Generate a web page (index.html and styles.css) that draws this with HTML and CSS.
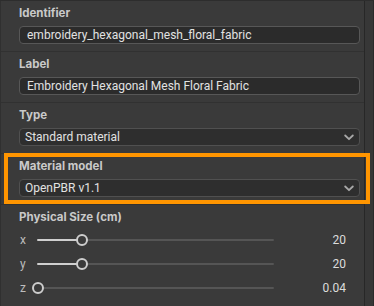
FILE: index.html
```html
<!DOCTYPE html>
<html>
<head>
<meta charset="utf-8">
<link rel="stylesheet" href="styles.css">
</head>
<body>
<div class="panel">
  <div class="content">
    <div class="section">
      <div class="label">Identifier</div>
      <div class="field">embroidery_hexagonal_mesh_floral_fabric</div>
    </div>
    <div class="section">
      <div class="label">Label</div>
      <div class="field">Embroidery Hexagonal Mesh Floral Fabric</div>
    </div>
    <div class="section">
      <div class="label">Type</div>
      <div class="select"><span>Standard material</span><svg class="chev" width="10" height="7" viewBox="0 0 10 7"><path d="M1.2 1.5 L5 5.2 L8.8 1.5" fill="none" stroke="#a8a8a8" stroke-width="1.8" stroke-linecap="round" stroke-linejoin="round"/></svg></div>
    </div>
    <div class="section">
      <div class="label">Material model</div>
      <div class="select"><span>OpenPBR v1.1</span><svg class="chev" width="10" height="7" viewBox="0 0 10 7"><path d="M1.2 1.5 L5 5.2 L8.8 1.5" fill="none" stroke="#a8a8a8" stroke-width="1.8" stroke-linecap="round" stroke-linejoin="round"/></svg></div>
    </div>
    <div class="section last">
      <div class="label">Physical Size (cm)</div>
      <div class="row">
        <span class="axis">x</span>
        <div class="slider"><div class="track"></div><div class="fill" style="width:18.5%"></div><div class="thumb" style="left:18.5%"></div></div>
        <span class="value">20</span>
      </div>
      <div class="row">
        <span class="axis">y</span>
        <div class="slider"><div class="track"></div><div class="fill" style="width:18.5%"></div><div class="thumb" style="left:18.5%"></div></div>
        <span class="value">20</span>
      </div>
      <div class="row">
        <span class="axis">z</span>
        <div class="slider"><div class="track"></div><div class="fill" style="width:0%"></div><div class="thumb" style="left:0%"></div></div>
        <span class="value">0.04</span>
      </div>
    </div>
  </div>
  <div class="scrollbar"></div>
</div>
<div class="highlight"></div>
</body>
</html>
```
FILE: styles.css
```css
html, body {
  margin: 0;
  padding: 0;
  width: 374px;
  height: 306px;
  overflow: hidden;
  background: #3a3a3a;
  font-family: Inter, "Liberation Sans", sans-serif;
  -webkit-font-smoothing: antialiased;
}
.panel {
  display: flex;
  height: 306px;
  border-top: 1px solid #2d2d2d;
  box-sizing: border-box;
}
.content {
  width: 364px;
  border-left: 1px solid #303030;
  box-sizing: border-box;
}
.scrollbar {
  width: 10px;
  background: #373737;
  border-left: 1px solid #272727;
  border-right: 1px solid #2a2a2a;
  box-sizing: border-box;
}
.section {
  padding: 5px 4px 7px 18px;
  border-bottom: 1px solid #313131;
  height: 51px;
  box-sizing: border-box;
}
.section.last {
  border-bottom: none;
  height: auto;
}
.label {
  font-size: 11.5px;
  font-weight: 700;
  line-height: 15px;
  color: #c9c9c9;
  margin-bottom: 5px;
}
.section.last .label {
  margin-bottom: 3px;
}
.field, .select {
  height: 18px;
  box-sizing: border-box;
  border: 1px solid #575757;
  border-radius: 4px;
  background: #2b2b2b;
  color: #e2e2e2;
  font-family: Roboto, "Liberation Sans", sans-serif;
  font-size: 12px;
  line-height: 16px;
  padding-left: 7px;
  white-space: nowrap;
}
.select {
  display: flex;
  align-items: center;
  justify-content: space-between;
  padding-left: 5px;
  padding-right: 5px;
  background: #2e2e2e;
  border-color: #505050;
}
.chev {
  display: block;
}
.row {
  display: flex;
  align-items: center;
  height: 24px;
}
.axis {
  width: 18px;
  font-family: Roboto, "Liberation Sans", sans-serif;
  font-size: 12px;
  color: #bdbdbd;
  padding-left: 1px;
}
.slider {
  position: relative;
  width: 236px;
  height: 12px;
}
.track {
  position: absolute;
  left: 0;
  right: 0;
  top: 5px;
  height: 2px;
  background: #555555;
  border-radius: 1px;
}
.fill {
  position: absolute;
  left: -1px;
  top: 5px;
  height: 2px;
  background: #cfcfcf;
  border-radius: 1px;
}
.thumb {
  position: absolute;
  top: 0;
  width: 12px;
  height: 12px;
  margin-left: -6px;
  box-sizing: border-box;
  border: 2.5px solid #cdcdcd;
  border-radius: 50%;
  background: #3a3a3a;
}
.value {
  width: 72px;
  text-align: right;
  font-family: Roboto, "Liberation Sans", sans-serif;
  font-size: 12px;
  color: #dcdcdc;
}
.highlight {
  position: absolute;
  left: 4px;
  top: 153px;
  width: 366px;
  height: 51px;
  box-sizing: border-box;
  border: 4px solid #ff9500;
}
```
